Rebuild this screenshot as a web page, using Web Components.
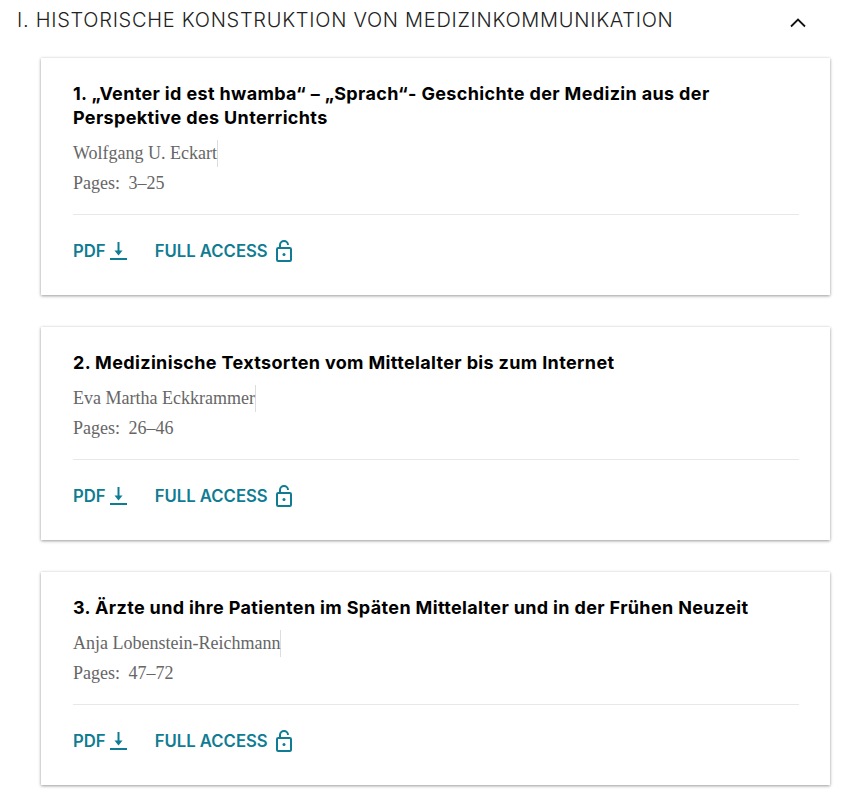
<!DOCTYPE html>
<html lang="de">
<head>
<meta charset="utf-8">
<title>Inhalt</title>
<style>
    html, body { margin: 0; background: #fff; }
</style>
</head>
<body>
<toc-section heading="I. HISTORISCHE KONSTRUKTION VON MEDIZINKOMMUNIKATION">
    <toc-card>
        <span slot="title">1. „Venter id est hwamba“ – „Sprach“- Geschichte der Medizin aus der Perspektive des Unterrichts</span>
        <span slot="author">Wolfgang U. Eckart</span>
        <span slot="pages">3–25</span>
    </toc-card>
    <toc-card>
        <span slot="title">2. Medizinische Textsorten vom Mittelalter bis zum Internet</span>
        <span slot="author">Eva Martha Eckkrammer</span>
        <span slot="pages">26–46</span>
    </toc-card>
    <toc-card>
        <span slot="title">3. Ärzte und ihre Patienten im Späten Mittelalter und in der Frühen Neuzeit</span>
        <span slot="author">Anja Lobenstein-Reichmann</span>
        <span slot="pages">47–72</span>
    </toc-card>
</toc-section>

<script>
(function (window, undefined) {
    'use strict'

    class TocCard extends HTMLElement {
        constructor() {
            super();
            const styles = `
            <style>
                :host {
                    display: block;
                    background: #fff;
                    padding: 24px 31px 32px 32px;
                    box-shadow: 0 1px 3px 0 rgba(0, 0, 0, .38), 0 0 3px 0 rgba(0, 0, 0, .06);
                }
                .title {
                    margin: 0;
                    font: 700 18px/24px Inter, "Liberation Sans", sans-serif;
                    letter-spacing: .35px;
                    color: #000;
                }
                .author {
                    display: block;
                    width: max-content;
                    margin-top: 10px;
                    border-right: 1px solid #ddd;
                    font: 18px/27px "Liberation Serif", serif;
                    color: #666;
                }
                .pages {
                    margin-top: 3px;
                    font: 18px/27px "Liberation Serif", serif;
                    color: #666;
                    word-spacing: 4px;
                }
                .links {
                    display: flex;
                    align-items: center;
                    gap: 28px;
                    margin-top: 17px;
                    padding-top: 24px;
                    border-top: 1px solid #e8e8e8;
                    font: 600 16.700px/24px Inter, "Liberation Sans", sans-serif;
                    color: #0f7c93;
                }
                .link { display: flex; align-items: center; gap: 4px; }
                .link.access { gap: 8px; }
                svg { display: block; fill: none; stroke: #0f7c93; }
            </style>
            `;

            const template = `
                <h3 class="title"><slot name="title"></slot></h3>
                <div class="author"><slot name="author"></slot></div>
                <div class="pages">Pages: <slot name="pages"></slot></div>
                <div class="links">
                    <span class="link">PDF
                        <svg width="17" height="20" viewBox="0 0 17 20">
                            <path d="M0 18h17" stroke-width="2"/>
                            <path d="M8.500 1v10" stroke-width="2"/>
                            <path d="M4.500 9.500h8l-4 5z" fill="#0f7c93" stroke="none"/>
                        </svg>
                    </span>
                    <span class="link access">FULL ACCESS
                        <svg width="16" height="22" viewBox="0 0 16 22" stroke-width="2">
                            <rect x="1" y="8" width="14" height="13" rx="1.200"/>
                            <path d="M4 8V5a4 4 0 0 1 8 0"/>
                            <circle cx="8" cy="14.500" r="1.500" fill="#0f7c93" stroke="none"/>
                        </svg>
                    </span>
                </div>
            `;

            this._shadow = this.attachShadow({ mode: 'open' });
            this._shadow.innerHTML = styles + template;
        }
    }

    class TocSection extends HTMLElement {
        constructor() {
            super();
            const styles = `
            <style>
                :host { display: block; padding-bottom: 12px; }
                .head {
                    display: flex;
                    align-items: center;
                    justify-content: space-between;
                    padding: 8px 62px 0 17px;
                    height: 26px;
                    font: 300 20px/24px Inter, "Liberation Sans", sans-serif;
                    letter-spacing: .72px;
                    color: #222;
                }
                .head span { align-self: flex-start; }
                .cards {
                    display: flex;
                    flex-direction: column;
                    gap: 32px;
                    width: 789px;
                    margin: 24px 0 0 41px;
                }
                svg { display: block; fill: none; stroke: #111; margin-top: 4px; }
            </style>
            `;

            const template = `
                <div class="head">
                    <span>${this.getAttribute('heading')}</span>
                    <svg width="16" height="10" viewBox="0 0 16 10" stroke-width="1.800"><path d="M1 8.500L8 1.500l7 7"/></svg>
                </div>
                <div class="cards"><slot></slot></div>
            `;

            this._shadow = this.attachShadow({ mode: 'open' });
            this._shadow.innerHTML = styles + template;
        }
    }

    customElements.define('toc-card', TocCard);
    customElements.define('toc-section', TocSection);
})(window);
</script>
</body>
</html>
